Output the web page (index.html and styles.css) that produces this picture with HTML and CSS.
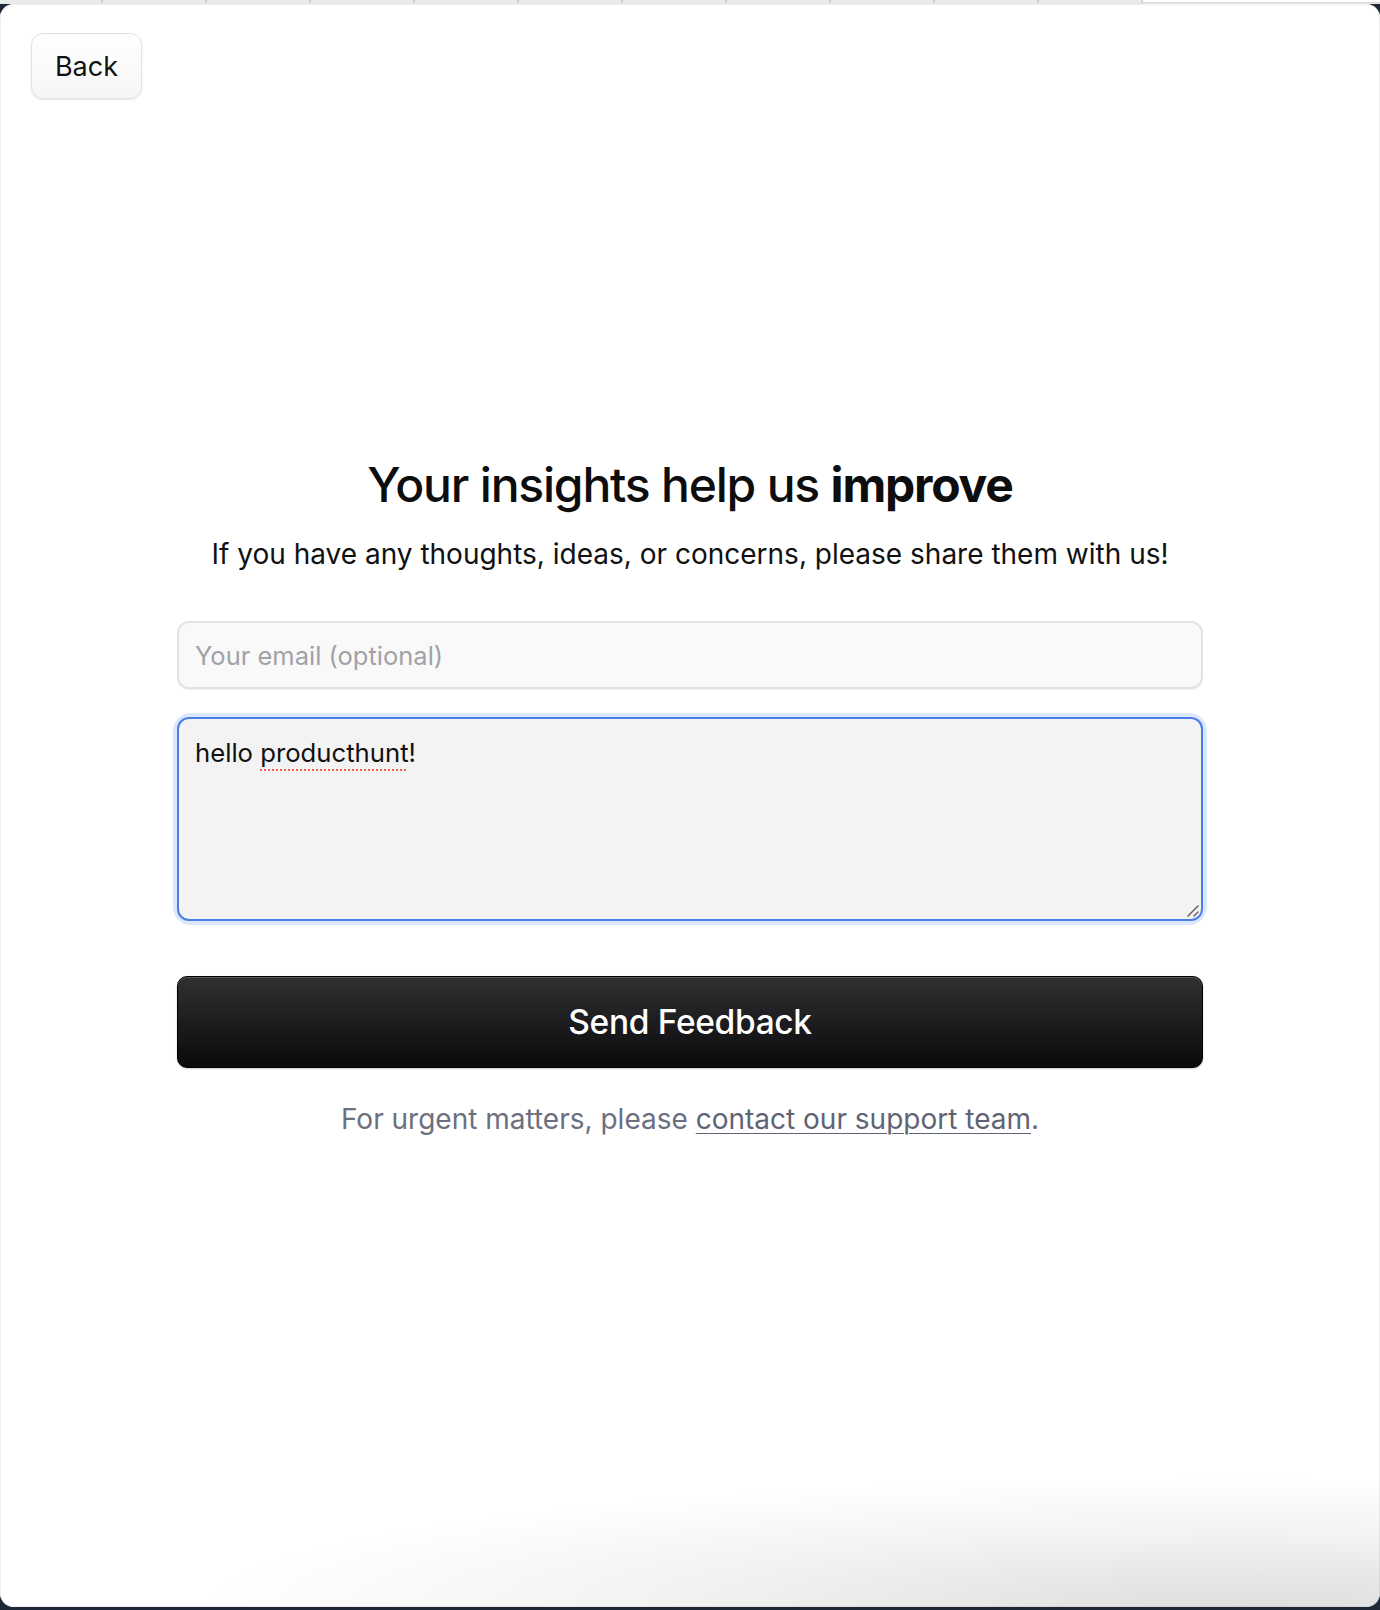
FILE: index.html
```html
<!DOCTYPE html>
<html lang="en">
<head>
<meta charset="utf-8">
<title>Feedback</title>
<link rel="stylesheet" href="styles.css">
</head>
<body>
<div class="tabs">
  <span class="tab"></span><span class="tab"></span><span class="tab"></span><span class="tab"></span><span class="tab"></span><span class="tab"></span><span class="tab"></span><span class="tab"></span><span class="tab"></span><span class="tab"></span><span class="tab"></span>
  <span class="tab tab-active"></span>
</div>
<div class="card">
  <div class="topbar">
    <button class="back-btn" type="button">Back</button>
  </div>
  <main class="content">
    <h1 class="title">Your insights help us <strong>improve</strong></h1>
    <p class="subtitle">If you have any thoughts, ideas, or concerns, please share them with us!</p>
    <form class="form">
      <input class="email" type="email" placeholder="Your email (optional)">
      <div class="message-wrap">
        <div class="message">hello <span class="misspelled">producthunt</span>!</div>
        <svg class="resize" width="14" height="14" viewBox="0 0 14 14"><path d="M3 13 L13 3 M9 13 L13 9" stroke="#6b6b6b" stroke-width="1.6" stroke-linecap="round"/></svg>
      </div>
      <button class="send-btn" type="button">Send Feedback</button>
    </form>
    <p class="note">For urgent matters, please <a href="#" class="note-link">contact our support team</a>.</p>
  </main>
</div>
<div class="footer-strip"></div>
</body>
</html>
```
FILE: styles.css
```css
* { box-sizing: border-box; }
html, body {
  margin: 0;
  padding: 0;
}
body {
  width: 1380px;
  height: 1610px;
  background: #1e2834;
  font-family: Inter, "Noto Sans", sans-serif;
  color: #111;
  display: flex;
  flex-direction: column;
  overflow: hidden;
}
.tabs {
  height: 4px;
  display: flex;
  background: #e6e6e6;
  flex: none;
}
.tab {
  width: 104px;
  height: 3px;
  border-right: 2px solid #d2d2d2;
  background: #ebebeb;
}
.tab:first-child { width: 103px; }
.tab-active {
  flex: 1;
  border-right: none;
  background: #fff;
  border-bottom: 1px solid #d9d9d9;
}
.card {
  flex: 1;
  background: #fff;
  border-radius: 14px;
  position: relative;
  display: flex;
  flex-direction: column;
  overflow: hidden;
  box-shadow: inset 0 0 0 1px #efefef;
}
.card::after {
  content: "";
  position: absolute;
  left: 0; right: 0; bottom: 0;
  height: 140px;
  pointer-events: none;
  background: radial-gradient(ellipse 1050px 130px at 90% 100%, rgba(0,0,0,0.13), rgba(0,0,0,0.05) 55%, rgba(0,0,0,0) 100%);
}
.footer-strip {
  height: 3px;
  background: #1e2834;
  flex: none;
}
.topbar {
  padding: 29px 0 0 31px;
}
.back-btn {
  width: 111px;
  height: 66px;
  border-radius: 12px;
  border: 1px solid #e2e2e2;
  background: linear-gradient(#ffffff, #f6f6f6);
  box-shadow: 0 1px 2px rgba(0,0,0,0.10);
  font-family: Inter, "Noto Sans", sans-serif;
  font-size: 27px;
  font-weight: 400;
  color: #111;
  padding: 0;
}
.content {
  width: 1026px;
  margin: 358px auto 0;
  display: flex;
  flex-direction: column;
  align-items: stretch;
}
.title {
  margin: 0;
  text-align: center;
  font-size: 48px;
  line-height: 56px;
  font-weight: 500;
  letter-spacing: -0.025em;
  color: #0d0d0d;
}
.title strong { font-weight: 700; }
.subtitle {
  margin: 22px 0 0;
  text-align: center;
  font-size: 28px;
  line-height: 39px;
  color: #111;
}
.form {
  margin-top: 47px;
  display: flex;
  flex-direction: column;
}
.email {
  height: 68px;
  width: 100%;
  border: 2px solid #e3e3e3;
  border-radius: 12px;
  background: #f9f9f9;
  padding: 0 16px;
  font-family: Inter, "Noto Sans", sans-serif;
  font-size: 25.5px;
  color: #111;
  box-shadow: 0 1px 1px rgba(0,0,0,0.06);
  outline: none;
}
.email::placeholder { color: #a1a1a8; }
.message-wrap {
  margin-top: 28px;
  position: relative;
  border-radius: 14px;
  box-shadow: 0 0 0 4px #dce6fc;
}
.message {
  height: 204px;
  border: 2px solid #4a7fe8;
  border-radius: 12px;
  background: #f3f3f3;
  padding: 18px 16px;
  font-size: 25.7px;
  line-height: 32px;
  color: #111;
}
.misspelled {
  text-decoration: underline dotted #ef5b52;
  text-decoration-thickness: 2px;
  text-underline-offset: 7px;
}
.resize {
  position: absolute;
  right: 4px;
  bottom: 4px;
}
.send-btn {
  margin-top: 55px;
  height: 92px;
  width: 100%;
  border: 1px solid #000;
  border-radius: 10px;
  background: linear-gradient(#303033, #0a0a0c);
  box-shadow: inset 0 1px 0 rgba(255,255,255,0.18), 0 1px 2px rgba(0,0,0,0.2);
  color: #fff;
  font-family: Inter, "Noto Sans", sans-serif;
  font-size: 33.5px;
  font-weight: 500;
  letter-spacing: -0.01em;
}
.note {
  margin: 32px 0 0;
  text-align: center;
  font-size: 28px;
  line-height: 39px;
  color: #6b7080;
}
.note-link {
  color: #5f6475;
  text-decoration: underline;
  text-decoration-thickness: 1px;
  text-underline-offset: 4px;
}
```
